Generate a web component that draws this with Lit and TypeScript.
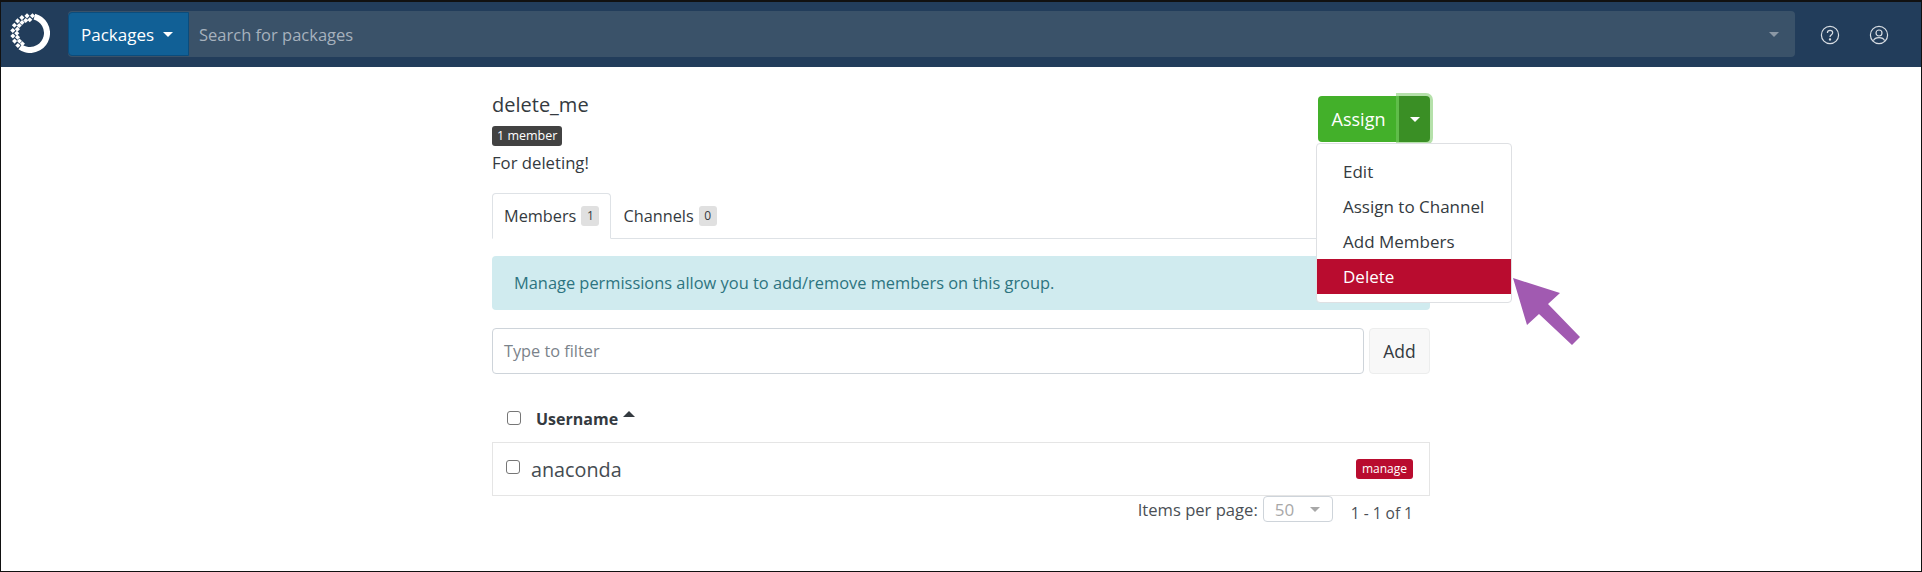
import { LitElement, html, css, svg } from 'lit';
import { customElement } from 'lit/decorators.js';

const logoDots = () => {
  // lattice of diamonds on the left side of the ring
  const items = [];
  for (let a = 125; a <= 285; a += 18) {
    const t = (a * Math.PI) / 180;
    for (const [r, off] of [[13.2, 0], [17.4, 0.16]] as [number, number][]) {
      const x = 20 + r * Math.cos(t + off);
      const y = 20 + r * Math.sin(t + off);
      items.push(svg`<rect x=${x - 1.8} y=${y - 1.8} width="3.6" height="3.6" fill="#fff" transform="rotate(45 ${x} ${y})"></rect>`);
    }
  }
  return items;
};

@customElement('app-root')
export class AppRoot extends LitElement {
  static styles = css`
    :host {
      display: block;
      height: 572px;
      box-sizing: border-box;
      border: 1px solid #111;
      border-top-width: 2px;
      font-family: 'Open Sans', 'Lato', sans-serif;
      font-size: 16.3px;
      color: #343a40;
      background: #fff;
      position: relative;
      overflow: hidden;
    }
    .nav {
      height: 65px;
      background: #223d5b;
      display: flex;
      align-items: center;
      padding: 0 0 0 9px;
    }
    .logo { width: 40px; height: 40px; margin: 0 18px 3px 0; flex: none; }
    .search {
      display: flex;
      width: 1727px;
      height: 46px;
      margin-bottom: 1px;
      border-radius: 4px;
      background: #3a5269;
      align-items: center;
    }
    .pkg {
      width: 121px;
      height: 44px;
      box-sizing: border-box;
      background: #116096;
      border: 1px solid #0b4c7c;
      border-radius: 4px 0 0 4px;
      color: #fff;
      display: flex;
      align-items: center;
      padding-left: 12px;
      gap: 9px;
      font-size: 17px;
    }
    .caret {
      width: 0;
      height: 0;
      border-left: 5px solid transparent;
      border-right: 5px solid transparent;
      border-top: 5px solid currentColor;
    }
    .ph { color: #a6b1bd; font-size: 16.5px; margin-left: 10px; flex: 1; }
    .end { color: #8b98a5; margin-right: 16px; }
    .nav-icon { width: 20px; height: 20px; flex: none; }
    .icons { display: flex; gap: 29px; margin-left: 25px; }

    .main {
      width: 938px;
      margin-left: 491px;
      padding-top: 26px;
    }
    .head { display: flex; justify-content: space-between; align-items: flex-start; height: 100px; }
    h1 { margin: 0; font-size: 20px; font-weight: 400; line-height: 24px; }
    .badge {
      display: inline-block;
      font-size: 12.5px;
      line-height: 20px;
      height: 20px;
      padding: 0 5px;
      border-radius: 3px;
      color: #fff;
      background: #424242;
    }
    .member { margin-top: 9px; width: 70px; box-sizing: border-box; text-align: center; white-space: nowrap; }
    .desc { font-size: 16.7px; line-height: 24px; margin-top: 5px; }
    .split { display: flex; height: 46px; margin-top: 3px; color: #fff; font-size: 18px; }
    .assign {
      width: 81px;
      background: #43b02a;
      border-radius: 4px 0 0 4px;
      display: flex;
      align-items: center;
      justify-content: center;
    }
    .toggle {
      width: 31px;
      background: #3a8f25;
      border-radius: 0 4px 4px 0;
      display: flex;
      align-items: center;
      justify-content: center;
      box-shadow: 0 0 0 3px rgba(120, 200, 100, 0.55);
    }
    .menu {
      position: absolute;
      left: 1315px;
      top: 141px;
      width: 196px;
      height: 160px;
      box-sizing: border-box;
      padding: 10px 0 8px;
      background: #fff;
      border: 1px solid #dee0e3;
      border-radius: 4px;
      font-size: 17px;
      z-index: 2;
    }
    .menu div { height: 35px; line-height: 35px; padding-left: 26px; }
    .menu .del { background: #b90c2f; color: #fff; }
    .arrow { position: absolute; left: 1505px; top: 276px; z-index: 3; }

    .tabs { display: flex; height: 46px; border-bottom: 1px solid #dee2e6; box-sizing: border-box; }
    .tab {
      display: flex;
      align-items: center;
      gap: 5px;
      padding: 0 12px;
      height: 46px;
      box-sizing: border-box;
    }
    .tab.on { border: 1px solid #dee2e6; border-bottom-color: #fff; border-radius: 4px 4px 0 0; background: #fff; padding: 0 11px; }
    .count { background: #e0e0e0; font-size: 12px; width: 18px; height: 20px; line-height: 20px; border-radius: 3px; text-align: center; }
    .alert {
      margin-top: 17px;
      height: 54px;
      line-height: 54px;
      padding-left: 22px;
      background: #d0ebef;
      border-radius: 4px;
      color: #2d7480;
      font-size: 16.4px;
    }
    .filter { display: flex; margin-top: 18px; gap: 5px; }
    .input {
      flex: 1;
      height: 46px;
      box-sizing: border-box;
      border: 1px solid #ced4da;
      border-radius: 4px;
      color: #7b838b;
      line-height: 44px;
      padding-left: 11px;
    }
    .add {
      width: 61px;
      height: 46px;
      box-sizing: border-box;
      border: 1px solid #eceded;
      border-radius: 4px;
      background: #f8f8f8;
      text-align: center;
      line-height: 44px;
      font-size: 17.5px;
    }
    .cols { display: flex; align-items: center; height: 68px; padding-left: 15px; box-sizing: border-box; padding-top: 20px; }
    .check { width: 12px; height: 12px; border: 1px solid #767676; border-radius: 3px; flex: none; }
    .cols b { margin: 2px 0 0 15px; font-size: 16px; font-weight: 700; }
    .up {
      width: 0;
      height: 0;
      margin: 0 0 8px 5px;
      border-left: 6px solid transparent;
      border-right: 6px solid transparent;
      border-bottom: 6px solid #343a40;
    }
    .row {
      height: 54px;
      box-sizing: border-box;
      border: 1px solid #e5e5e5;
      display: flex;
      align-items: center;
      padding: 0 16px 0 13px;
    }
    .row .check { margin-bottom: 4px; }
    .row .name { font-size: 19.8px; margin-left: 11px; flex: 1; color: #454b51; }
    .manage { background: #b90c2f; color: #fff; font-size: 12px; height: 20px; line-height: 20px; padding: 0 6px; border-radius: 3px; }
    .pager { display: flex; justify-content: flex-end; align-items: flex-start; color: #4a4f55; padding-right: 17px; }
    .pager .lbl { font-size: 16.6px; line-height: 24px; margin-top: 2px; }
    .select {
      width: 70px;
      height: 26px;
      box-sizing: border-box;
      border: 1px solid #ced4da;
      border-radius: 4px;
      margin: 0 18px 0 5px;
      padding: 0 12px 0 11px;
      display: flex;
      align-items: center;
      justify-content: space-between;
      color: #a8a8a8;
      font-size: 17px;
    }
    .pager .of { font-size: 15.5px; line-height: 20px; margin-top: 7px; }
  `;

  render() {
    return html`
      <div class="nav">
        <svg class="logo" viewBox="0 0 40 40">
          <circle cx="20" cy="20" r="17" fill="none" stroke="#fff" stroke-width="6" stroke-dasharray="59 200" transform="rotate(-75 20 20)"></circle>
          ${logoDots()}
        </svg>
        <div class="search">
          <div class="pkg">Packages <span class="caret"></span></div>
          <div class="ph">Search for packages</div>
          <span class="caret end"></span>
        </div>
        <div class="icons">
          <svg class="nav-icon" viewBox="0 0 20 20" fill="none" stroke="#d8dde3" stroke-width="1.2">
            <circle cx="10" cy="10" r="8.6"></circle>
            <path d="M7.4 8c0-1.6 1.2-2.6 2.7-2.6S12.7 6.4 12.7 7.8c0 1.8-2.7 2.100-2.700 4.200"></path>
            <circle cx="10" cy="14.4" r=".6" fill="#d8dde3"></circle>
          </svg>
          <svg class="nav-icon" viewBox="0 0 20 20" fill="none" stroke="#d8dde3" stroke-width="1.2">
            <circle cx="10" cy="10" r="8.6"></circle>
            <circle cx="10" cy="8" r="3"></circle>
            <path d="M4.4 15.6c.8-2 2.6-3 5.600-3s4.800 1 5.600 3"></path>
          </svg>
        </div>
      </div>

      <div class="main">
        <div class="head">
          <div>
            <h1>delete_me</h1>
            <div class="badge member">1 member</div>
            <div class="desc">For deleting!</div>
          </div>
          <div class="split">
            <div class="assign">Assign</div>
            <div class="toggle"><span class="caret"></span></div>
          </div>
        </div>
        <div class="tabs">
          <div class="tab on">Members <span class="count">1</span></div>
          <div class="tab">Channels <span class="count">0</span></div>
        </div>
        <div class="alert">Manage permissions allow you to add/remove members on this group.</div>
        <div class="filter">
          <div class="input">Type to filter</div>
          <div class="add">Add</div>
        </div>
        <div class="cols">
          <span class="check"></span>
          <b>Username</b>
          <span class="up"></span>
        </div>
        <div class="row">
          <span class="check"></span>
          <span class="name">anaconda</span>
          <span class="manage">manage</span>
        </div>
        <div class="pager">
          <span class="lbl">Items per page:</span>
          <div class="select">50 <span class="caret"></span></div>
          <span class="of">1 - 1 of 1</span>
        </div>
      </div>

      <div class="menu">
        <div>Edit</div>
        <div>Assign to Channel</div>
        <div>Add Members</div>
        <div class="del">Delete</div>
      </div>
      <svg class="arrow" width="76" height="72" viewBox="0 0 76 72">
        <path d="M7 0 L54 15 L42 26 L74 59 L66 67 L33 36 L21 47 Z" fill="#a15ab1"></path>
      </svg>
    `;
  }
}
